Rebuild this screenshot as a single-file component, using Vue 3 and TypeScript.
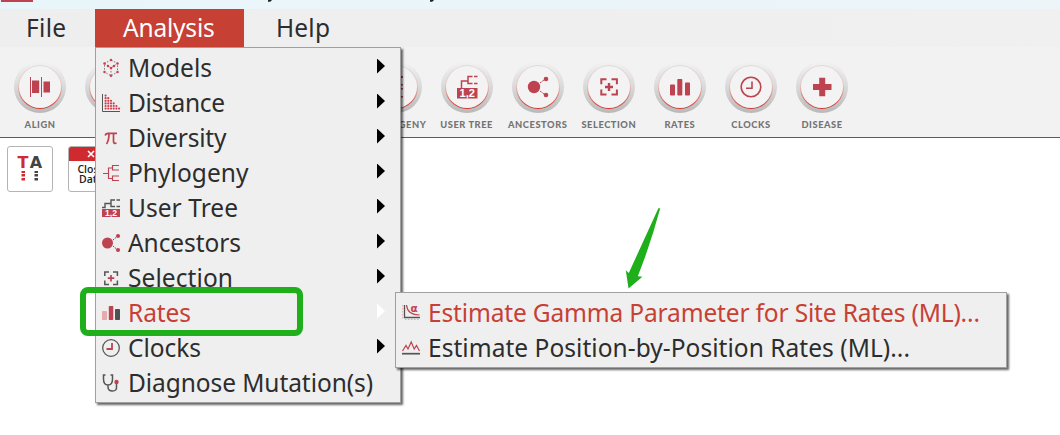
<script setup lang="ts">
interface MenuEntry {
  id: string
  label: string
  width: number
  arrow?: boolean
  active?: boolean
}

const tools = [
  'Align', 'Data', 'Models', 'Distance', 'Diversity', 'Phylogeny',
  'User Tree', 'Ancestors', 'Selection', 'Rates', 'Clocks', 'Disease',
]

const entries: MenuEntry[] = [
  { id: 'models', label: 'Models', width: 84, arrow: true },
  { id: 'distance', label: 'Distance', width: 97, arrow: true },
  { id: 'diversity', label: 'Diversity', width: 98.5, arrow: true },
  { id: 'phylogeny', label: 'Phylogeny', width: 120.5, arrow: true },
  { id: 'usertree', label: 'User Tree', width: 110, arrow: true },
  { id: 'ancestors', label: 'Ancestors', width: 113, arrow: true },
  { id: 'selection', label: 'Selection', width: 105, arrow: true },
  { id: 'rates', label: 'Rates', width: 63, arrow: true, active: true },
  { id: 'clocks', label: 'Clocks', width: 73, arrow: true },
  { id: 'diagnose', label: 'Diagnose Mutation(s)', width: 245 },
]

const subEntries: MenuEntry[] = [
  { id: 'gamma', label: 'Estimate Gamma Parameter for Site Rates (ML)...', width: 552, active: true },
  { id: 'position', label: 'Estimate Position-by-Position Rates (ML)...', width: 482 },
]

const distanceDots = [1, 2, 3, 4, 5, 6].flatMap((n, row) =>
  Array.from({ length: n }, (_, col) => ({ x: 3.6 + col * 2.7, y: 1.6 + row * 2.6 })),
)

const modelDots = [
  [9, 1], [2.5, 4.5], [15.5, 4.5], [9, 9], [2.5, 13], [15.5, 13], [9, 16.8], [6, 7], [12, 7],
]
</script>

<template>
  <main class="window">
    <div class="titlebar">
      <i class="app-icon"></i>
      <svg class="title-tails" width="200" height="3">
        <path d="M14 0h4q-.8 2-3.800 2zM176 0h4q-.8 2-3.800 2z" />
      </svg>
    </div>

    <nav class="menubar">
      <span class="top file">File</span>
      <span class="top analysis">Analysis</span>
      <span class="top help">Help</span>
    </nav>

    <section class="toolbar">
      <div v-for="tool in tools" :key="tool" class="tool">
        <div class="ring">
          <div class="glow">
            <div class="face">
              <svg width="30" height="30" viewBox="0 0 30 30">
                <g v-if="tool === 'Align'" fill="#bd4350">
                  <path d="M5 5h1v20H5zM16 5h1v20h-1zM7 8.500h7.200v12.500H7zM18.500 9.500h6.500V20.500h-6.500z" />
                </g>
                <g v-else-if="tool === 'Phylogeny'" fill="#bd4350">
                  <path d="M13 4h9v2h-9zM13 12h9v1.500h-9zM13 16h9v1.500h-9zM13 24h9v1.500h-9z" />
                </g>
                <g v-else-if="tool === 'User Tree'">
                  <path d="M9.500 16V9H16M20.500 4.500h-4.500V11.500H20.500M22 4.500H25.500M22 11.500H25.500" fill="none" stroke="#bd4350" stroke-width="1.500" />
                  <path d="M5 16h20.500v10.500H5z" fill="#bd4350" />
                  <text x="15.200" y="25" text-anchor="middle" class="badge">1,2</text>
                </g>
                <g v-else-if="tool === 'Ancestors'" fill="#bd4350">
                  <circle cx="11" cy="15" r="6.200" /><circle cx="23" cy="7" r="2.300" /><circle cx="23" cy="23" r="2.300" />
                  <path d="M17 11l4-3M17 19l4 3" stroke="#bd4350" stroke-dasharray="2 1" />
                </g>
                <g v-else-if="tool === 'Selection'" fill="none" stroke="#bd4350" stroke-width="2">
                  <path d="M12.500 7.300H7.300v5M17.500 7.300h5.400v5M12.500 22.500H7.300v-5M17.500 22.500h5.400v-5" />
                  <path d="M15 11v8M11 15h8" stroke-width="2.400" />
                </g>
                <g v-else-if="tool === 'Rates'" fill="#bd4350">
                  <rect x="5" y="12.500" width="5" height="11" rx=".8" />
                  <rect x="12.300" y="7" width="5" height="16.500" rx=".8" />
                  <rect x="20" y="10.500" width="5" height="13" rx=".8" />
                </g>
                <g v-else-if="tool === 'Clocks'" fill="none" stroke="#bd4350" stroke-width="1.600">
                  <circle cx="15" cy="15" r="9.800" /><path d="M16 9.500v6.800h-6" />
                </g>
                <path v-else-if="tool === 'Disease'" d="M12.200 5.700h6v6.300h6.300v6h-6.300v6.300h-6V18H6v-6h6.200z" fill="#bd4350" />
              </svg>
            </div>
          </div>
        </div>
        <span class="tool-label">{{ tool }}</span>
      </div>
    </section>

    <section class="workspace">
      <div class="tile ta">
        <svg width="43" height="43" viewBox="0 0 43 43">
          <text x="15" y="21" text-anchor="middle" fill="#cf2a2f" class="letter">T</text>
          <text x="28" y="21" text-anchor="middle" fill="#444" class="letter">A</text>
          <path d="M13.500 24H17v2h-3.500zM13.500 27H17v2.500h-3.500zM13.500 31H17v2.500h-3.500z" fill="#cf2a2f" />
          <path d="M26.500 24H30v2h-3.500zM26.500 27H30v2.500h-3.500zM26.500 31H30v2.500h-3.500z" fill="#444" />
        </svg>
      </div>
      <div class="tile close">
        <div class="close-head">
          <svg width="8" height="8" viewBox="0 0 8 8"><path d="M1 1l6 6M7 1l-6 6" stroke="#fff" stroke-width="1.600" /></svg>
        </div>
        <div class="close-text">Close<br>Data</div>
      </div>
    </section>

    <div class="menu main-menu">
      <div v-for="e in entries" :key="e.id" class="row" :class="{ active: e.active }">
        <svg class="icon" width="18" height="18" viewBox="0 0 18 18">
          <g v-if="e.id === 'models'">
            <path d="M9 1L2.500 4.500v8.500L9 16.800l6.500-3.800v-8.500zM2.500 4.500L9 9l6.500-4.500M9 9v7" class="gray" stroke-width=".8" stroke-dasharray="1.500 1.500" />
            <circle v-for="(p, i) in modelDots" :key="i" :cx="p[0]" :cy="p[1]" r="1.250" fill="#cf3f4c" />
          </g>
          <g v-else-if="e.id === 'distance'">
            <path d="M.5 0v17.500H18" class="gray" />
            <circle v-for="(p, i) in distanceDots" :key="i" :cx="p.x" :cy="p.y" r="1.100" fill="#cf3f4c" />
          </g>
          <path v-else-if="e.id === 'diversity'" d="M3.200 6.500Q3.800 4.300 6 4.300h9M7 4.500q0 7-2.500 10.500M11.500 4.500v8q0 2.500 3 1.500" fill="none" stroke="#bd4350" stroke-width="1.700" />
          <path v-else-if="e.id === 'phylogeny'" d="M1 9.500h5.500M17 1.500h-6.500v4.500H17M10.500 4H6.500v10.500h4M17 12h-6.500v4.500H17" fill="none" stroke="#bd4350" stroke-width="1.150" />
          <g v-else-if="e.id === 'usertree'">
            <path d="M0 8.500h3v-4h6M13 1H9v6.500h4M14.500 1H18M14.500 7.500H18" class="gray" stroke-width="1.400" />
            <path d="M0 10h18v8H0z" fill="#bd4350" />
            <text x="9" y="16.900" text-anchor="middle" class="badge small">1,2</text>
          </g>
          <g v-else-if="e.id === 'ancestors'">
            <circle cx="5.500" cy="9" r="5.500" fill="#bd4350" /><circle cx="16" cy="2" r="2.100" fill="#bd4350" /><circle cx="16" cy="16" r="2.100" fill="#bd4350" />
            <path d="M11 6l3-2.500M11 12l3 2.500" class="gray" stroke-dasharray="1.500 1" />
          </g>
          <g v-else-if="e.id === 'selection'">
            <path d="M7 3H2.800v4M11 3h4.400v4M7 15.500H2.800v-4M11 15.500h4.400v-4" class="gray" stroke-width="1.500" />
            <path d="M9 6v6.500M5.800 9.200h6.500" stroke="#bd4350" stroke-width="1.700" />
          </g>
          <g v-else-if="e.id === 'rates'">
            <rect x="0" y="7" width="5" height="9" rx=".8" fill="#e6a9ac" />
            <rect x="6.800" y="2" width="4.500" height="14" rx=".8" fill="#bd4350" />
            <rect x="13" y="5" width="5" height="11" rx=".8" fill="#505050" />
          </g>
          <g v-else-if="e.id === 'clocks'">
            <circle cx="9" cy="9" r="8.300" class="gray" stroke-width="1.250" /><path d="M10 4v6H4.500" fill="none" stroke="#bd4350" stroke-width="1.800" />
          </g>
          <g v-else>
            <path d="M3.500 1H1.500v4q0 6 4.500 6t4.500-6V1h-2M6 11v2q0 4 4.500 4t4-4.500V9.500" class="gray" stroke-width="1.500" />
            <circle cx="14.500" cy="8" r="2.200" fill="#bd4350" />
          </g>
        </svg>
        <svg class="label" :width="e.width + 4" height="35">
          <text x="0" y="26" :textLength="e.width">{{ e.label }}</text>
        </svg>
        <i v-if="e.arrow" class="arrow"></i>
      </div>
    </div>

    <div class="menu sub-menu">
      <div v-for="e in subEntries" :key="e.id" class="row" :class="{ active: e.active }">
        <svg class="icon" width="18" height="18" viewBox="0 0 18 18">
          <g v-if="e.id === 'gamma'">
            <path d="M2.500 1v12.500H18" class="gray" stroke-width="1.300" />
            <path d="M.7 1v15M3 15.500h15" fill="none" stroke="#e6a9ac" stroke-dasharray="1.500 1.500" />
            <path d="M4.500 1Q5.500 11 17.500 11" fill="none" stroke="#bd4350" stroke-width="1.200" />
            <text x="8.500" y="8" class="alpha">α</text>
          </g>
          <g v-else>
            <path d="M.5 12L4 6.500l2 3.500L9.200 3l3 7L14.500 6.500 17.500 12" fill="none" stroke="#bd4350" stroke-width="1.200" />
            <path d="M0 14.700h18" class="gray" stroke-width="1.700" />
          </g>
        </svg>
        <svg class="label" :width="e.width + 4" height="35">
          <text x="0" y="26" :textLength="e.width">{{ e.label }}</text>
        </svg>
      </div>
    </div>

    <div class="highlight"></div>
    <svg class="pointer" width="40" height="90" viewBox="0 0 40 90">
      <path d="M33.400 3.200L35.200 3.300Q26 38 12.800 71.200L17.400 71.700 3.500 83.500.8 65.200 3.800 68Z" fill="#1faf1b" />
    </svg>
  </main>
</template>

<style>
body { margin: 0; overflow: hidden; }
</style>

<style scoped>
.window {
  position: relative;
  width: 1060px;
  height: 435px;
  overflow: hidden;
  background: #fff;
  font-family: "Noto Sans", "Open Sans", sans-serif;
  color: #2d2d2d;
}
.titlebar { height: 9px; display: flex; background: linear-gradient(90deg, #e8f6fa, #edf5f9); }
.app-icon { width: 32px; height: 2px; margin-left: 1px; background: #bd4350; }
.title-tails { margin-left: 221px; fill: #222; }
.menubar { height: 38px; display: flex; background: linear-gradient(90deg, #eee, #f0f0f0); }
.top { font-size: 24.500px; line-height: 38px; box-sizing: border-box; white-space: nowrap; }
.file { width: 95px; padding-left: 26px; letter-spacing: .3px; }
.analysis { width: 149px; padding-left: 28px; background: #c74034; color: #fff; letter-spacing: -.2px; }
.help { padding-left: 32px; letter-spacing: .2px; }
.toolbar {
  height: 91px;
  box-sizing: border-box;
  display: flex;
  padding: 14px 0 0 4.500px;
  background: #f2f2f2;
  border-bottom: 1px solid #cb2c30;
}
.tool { width: 71.100px; flex: none; display: flex; flex-direction: column; align-items: center; }
.ring {
  width: 52px; height: 52px; border-radius: 50%;
  display: grid; place-items: center;
  background: linear-gradient(#f2f2f2 2%, #dcdcdc 45%, #b9b9b9);
}
.glow {
  width: 44px; height: 44px; border-radius: 50%;
  display: grid; place-items: center;
  background: linear-gradient(#ddd, #e8c9c2 45%, #d42f28);
}
.face { width: 42px; height: 42px; border-radius: 50%; background: #f3f3f3; display: grid; place-items: center; }
.badge { fill: #fff; font: bold 11px "Liberation Sans", sans-serif; }
.badge.small { font-size: 8.500px; }
.tool-label {
  margin-top: 6px;
  font: 900 9.300px/12px Lato, sans-serif;
  letter-spacing: .55px;
  text-transform: uppercase;
  color: #747474;
  white-space: nowrap;
}
.workspace { display: flex; gap: 15px; padding: 8px 7px; }
.tile {
  width: 46px; height: 46px; box-sizing: border-box;
  border: 1px solid #b4b4b4; border-radius: 3px; overflow: hidden;
}
.letter { font: bold 16px "DejaVu Sans", sans-serif; }
.close-head { height: 14px; background: #cf2a2f; display: grid; place-items: center; }
.close-text { margin-top: 3px; text-align: center; font: 600 10.500px/10px "Open Sans", sans-serif; color: #222; }
.menu {
  position: absolute;
  box-sizing: border-box;
  background: #efefef;
  border: 1px solid #a0a0a0;
  padding: 3px 0 1px;
  box-shadow: 2px 2px 2px rgba(0, 0, 0, .6);
}
.main-menu { left: 95px; top: 47px; width: 306px; height: 356px; }
.sub-menu { left: 395px; top: 292px; width: 612px; height: 76px; }
.row { height: 35px; display: flex; align-items: center; padding-left: 6px; }
.icon { flex: none; overflow: visible; margin-right: 8px; margin-bottom: 2px; }
.gray { fill: none; stroke: #555; }
.label { flex: none; overflow: visible; font-size: 24.500px; fill: #2d2d2d; }
.active .label { fill: #c74034; }
.alpha { font: bold 10.500px "DejaVu Sans", sans-serif; fill: #bd4350; }
.arrow {
  width: 8px; height: 15px; margin: 0 15px 5px auto;
  background: #000; clip-path: polygon(0 0, 100% 50%, 0 100%);
}
.active .arrow { background: #fff; }
.highlight {
  position: absolute; left: 80px; top: 287px; width: 223px; height: 49px;
  box-sizing: border-box; border: 6px solid #1faf1b; border-radius: 8px;
}
.pointer { position: absolute; left: 625px; top: 205px; }
</style>
